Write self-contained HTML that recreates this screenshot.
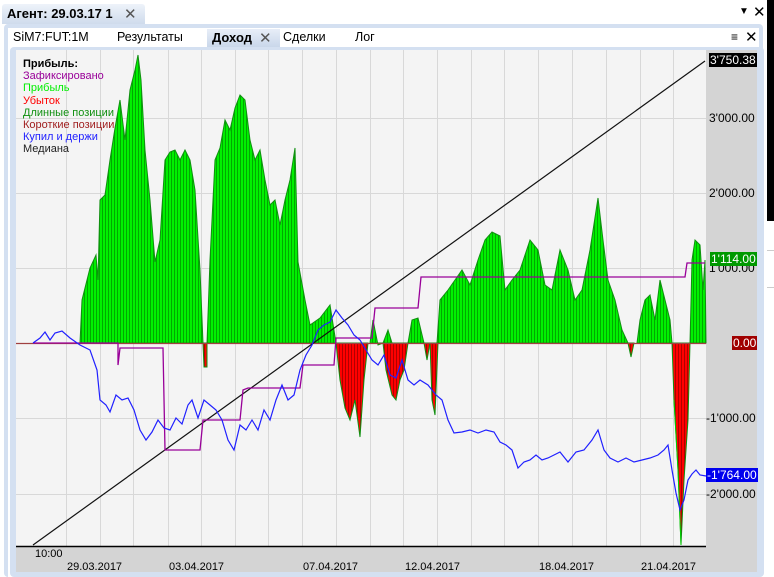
<!DOCTYPE html>
<html><head><meta charset="utf-8"><style>
body{margin:0;width:774px;height:577px;overflow:hidden;background:#fff;font-family:"Liberation Sans","DejaVu Sans",sans-serif;position:relative}
.t{position:absolute;font-size:12px;white-space:nowrap}
</style></head><body>
<div style="position:absolute;left:0;top:0;width:774px;height:577px;background:#fff"></div>
<div style="position:absolute;left:2px;top:4px;width:143px;height:20px;background:linear-gradient(#eef3fa,#cfdbec);border-radius:3px 3px 0 0"></div>
<div class="t" style="left:7px;top:6px;font-weight:bold;font-size:13px">Агент: 29.03.17 1</div>
<div class="t" style="left:124px;top:5px;font-size:15px;color:#555">✕</div>
<div class="t" style="left:739px;top:6px;font-size:10px">▼</div>
<div class="t" style="left:753px;top:3px;font-size:15px">✕</div>
<div style="position:absolute;left:767px;top:0;width:7px;height:221px;background:#000"></div>
<div style="position:absolute;left:767px;top:250px;width:7px;height:1px;background:#ccc"></div>
<div style="position:absolute;left:767px;top:287px;width:7px;height:1px;background:#ccc"></div>
<div style="position:absolute;left:4px;top:24px;width:759px;height:553px;background:#d4e0f1;border-radius:4px"></div>
<div style="position:absolute;left:8px;top:28px;width:751px;height:549px;background:#fff"></div>
<div style="position:absolute;left:207px;top:29px;width:73px;height:18px;background:linear-gradient(#e8eef8,#c9d7ea)"></div>
<div class="t" style="left:13px;top:30px;font-size:12.5px">SiM7:FUT:1M</div>
<div class="t" style="left:117px;top:30px;font-size:12.5px">Результаты</div>
<div class="t" style="left:212px;top:30px;font-weight:bold;font-size:13px">Доход</div>
<div class="t" style="left:259px;top:29px;font-size:15px;color:#555">✕</div>
<div class="t" style="left:283px;top:30px;font-size:12.5px">Сделки</div>
<div class="t" style="left:355px;top:30px;font-size:12.5px">Лог</div>
<div class="t" style="left:731px;top:30px;font-size:12px;font-weight:bold">≡</div>
<div class="t" style="left:745px;top:28px;font-size:15px">✕</div>
<div style="position:absolute;left:10px;top:47px;width:754px;height:530px;background:#d4e0f1;border-radius:4px"></div>
<div style="position:absolute;left:16px;top:50px;width:741px;height:522px;background:#d4d4d4"></div>
<svg style="position:absolute;left:0;top:0" width="774" height="577">
<defs>
<pattern id="g" width="3" height="10" patternUnits="userSpaceOnUse"><rect width="3" height="10" fill="#00f000"/><rect width="1" height="10" fill="#00a800"/></pattern>
<pattern id="r" width="3" height="10" patternUnits="userSpaceOnUse"><rect width="3" height="10" fill="#ff0000"/><rect width="1" height="10" fill="#b00000"/></pattern>
</defs>
<rect x="16" y="50" width="690" height="496" fill="#f4f4f4"/>
<g stroke="#d8d8d8" stroke-width="1">
<line x1="16" x2="706" y1="118.5" y2="118.5"/><line x1="16" x2="706" y1="193.5" y2="193.5"/><line x1="16" x2="706" y1="268.5" y2="268.5"/><line x1="16" x2="706" y1="418.5" y2="418.5"/><line x1="16" x2="706" y1="494.5" y2="494.5"/>
<line x1="66.5" x2="66.5" y1="50" y2="546"/><line x1="100.5" x2="100.5" y1="50" y2="546"/><line x1="133.5" x2="133.5" y1="50" y2="546"/><line x1="168.5" x2="168.5" y1="50" y2="546"/><line x1="201.5" x2="201.5" y1="50" y2="546"/><line x1="235.5" x2="235.5" y1="50" y2="546"/><line x1="268.5" x2="268.5" y1="50" y2="546"/><line x1="302.5" x2="302.5" y1="50" y2="546"/><line x1="336.5" x2="336.5" y1="50" y2="546"/><line x1="370.5" x2="370.5" y1="50" y2="546"/><line x1="403.5" x2="403.5" y1="50" y2="546"/><line x1="437.5" x2="437.5" y1="50" y2="546"/><line x1="471.5" x2="471.5" y1="50" y2="546"/><line x1="504.5" x2="504.5" y1="50" y2="546"/><line x1="538.5" x2="538.5" y1="50" y2="546"/><line x1="572.5" x2="572.5" y1="50" y2="546"/><line x1="606.5" x2="606.5" y1="50" y2="546"/><line x1="640.5" x2="640.5" y1="50" y2="546"/><line x1="673.5" x2="673.5" y1="50" y2="546"/>
</g>
<g stroke="#109010" stroke-width="1">
<polygon fill="url(#g)" points="80,343 82,300 90,268 96,255 98,280 100,200 105,195 110,160 115,128 120,100 125,140 130,90 135,70 138,55 141,80 145,150 150,200 155,262 160,240 165,160 170,152 175,150 180,160 185,150 190,160 195,190 200,270 203,343"/>
<polygon fill="url(#g)" points="207,343 210,260 215,160 220,148 225,120 230,130 235,108 240,95 245,100 250,140 255,160 260,150 265,180 270,205 275,200 280,225 285,200 290,180 295,148 298,262 305,300 310,325 320,318 330,305 336,343"/>
<polygon fill="url(#g)" points="370,343 373,320 378,345 383,343 388,330 392,343"/>
<polygon fill="url(#g)" points="408,343 412,320 418,318 424,343"/>
<polygon fill="url(#g)" points="437,343 440,300 448,290 455,280 462,270 470,285 478,260 485,240 492,232 500,236 505,290 512,280 520,270 530,240 538,250 545,285 552,290 560,250 568,270 575,300 582,290 590,250 598,198 603,240 608,280 615,300 622,330 628,343"/>
<polygon fill="url(#g)" points="637,343 640,320 645,300 650,295 655,320 660,280 665,300 670,320 672,343"/>
<polygon fill="url(#g)" points="690,343 692,260 695,240 700,245 703,290 705,260 706,343"/>
</g>
<g stroke="#109010" stroke-width="1">
<polygon fill="url(#r)" points="203,343 204,367 207,367 207,343"/>
<polygon fill="url(#r)" points="336,343 340,380 345,408 350,420 355,400 360,437 364,380 368,343"/>
<polygon fill="url(#r)" points="383,343 386,370 392,395 396,400 400,380 404,370 408,343"/>
<polygon fill="url(#r)" points="424,343 427,360 430,343"/>
<polygon fill="url(#r)" points="430,343 432,400 435,415 438,343"/>
<polygon fill="url(#r)" points="628,343 631,357 634,343"/>
<polygon fill="url(#r)" points="672,343 674,400 678,470 681,545 684,480 688,420 690,343"/>
</g>
<line x1="16" x2="706" y1="343.5" y2="343.5" stroke="#a04040" stroke-width="1.3"/>
<polyline fill="none" stroke="#00d000" stroke-width="1" points="674,400 678,470 681,545"/>
<line x1="33" y1="545" x2="705" y2="61" stroke="#111" stroke-width="1.2"/>
<polyline fill="none" stroke="#990099" stroke-width="1.3" points="33,343 118,343 118,365 120,348 163,348 165,450 200,450 203,420 240,420 243,390 248,388 300,388 303,365 334,365 336,338 372,338 375,308 418,308 421,277 685,277 687,263 705,263"/>
<polyline fill="none" stroke="#2020ff" stroke-width="1.2" points="33,343 40,338 45,332 50,340 55,333 62,331 70,338 80,345 90,350 97,370 100,400 106,405 110,412 116,395 122,400 128,398 134,410 140,430 146,440 152,432 158,420 164,428 170,430 176,418 182,424 188,405 192,400 198,418 204,400 210,405 216,410 222,420 228,440 234,450 240,425 246,430 252,420 258,430 264,410 270,420 276,400 282,385 288,400 294,395 300,370 306,355 312,345 318,330 324,325 330,322 336,310 342,318 348,325 354,335 360,340 366,350 372,360 378,365 384,355 390,375 396,378 402,360 408,380 414,385 420,380 428,385 436,395 442,400 448,420 454,433 462,432 470,430 478,433 486,430 494,432 500,442 506,445 512,450 518,468 524,462 530,460 536,455 542,460 548,458 554,455 560,452 568,462 576,452 584,450 592,440 598,430 604,450 610,458 618,462 626,458 634,462 642,460 650,458 658,455 664,450 668,445 672,470 676,493 680,510 684,500 688,480 692,474 696,470 700,475 706,476"/>
<line x1="16" x2="706" y1="546.5" y2="546.5" stroke="#000" stroke-width="1.5"/>
</svg>
<div class="t" style="left:23px;top:58px;font-size:11px;line-height:12.2px">
<b>Прибыль:</b><br><span style="color:#990099">Зафиксировано</span><br><span style="color:#00ee00">Прибыль</span><br><span style="color:#ff0000">Убыток</span><br><span style="color:#109010">Длинные позиции</span><br><span style="color:#a02020">Короткие позиции</span><br><span style="color:#2020ff">Купил и держи</span><br><span style="color:#222">Медиана</span></div>
<div class="t" style="left:709px;top:53px;background:#000;color:#fff;font-size:12px;padding:0 1px">3'750.38</div>
<div class="t" style="left:709px;top:111px;font-size:12px">3'000.00</div>
<div class="t" style="left:709px;top:186px;font-size:12px">2'000.00</div>
<div class="t" style="left:709px;top:261px;font-size:12px">1'000.00</div>
<div class="t" style="left:710px;top:252px;background:#009900;color:#fff;font-size:12px;padding:0 1px">1'114.00</div>
<div class="t" style="left:732px;top:336px;background:#a00000;color:#fff;font-size:12px;padding:0 1px">0.00</div>
<div class="t" style="left:706px;top:411px;font-size:12px">-1'000.00</div>
<div class="t" style="left:706px;top:468px;background:#0000ee;color:#fff;font-size:12px;padding:0 1px">-1'764.00</div>
<div class="t" style="left:706px;top:487px;font-size:12px">-2'000.00</div>
<div class="t" style="left:35px;top:548px;font-size:11px">10:00</div>
<div class="t" style="left:67px;top:561px;font-size:11px">29.03.2017</div>
<div class="t" style="left:169px;top:561px;font-size:11px">03.04.2017</div>
<div class="t" style="left:303px;top:561px;font-size:11px">07.04.2017</div>
<div class="t" style="left:405px;top:561px;font-size:11px">12.04.2017</div>
<div class="t" style="left:539px;top:561px;font-size:11px">18.04.2017</div>
<div class="t" style="left:641px;top:561px;font-size:11px">21.04.2017</div>
</body></html>
